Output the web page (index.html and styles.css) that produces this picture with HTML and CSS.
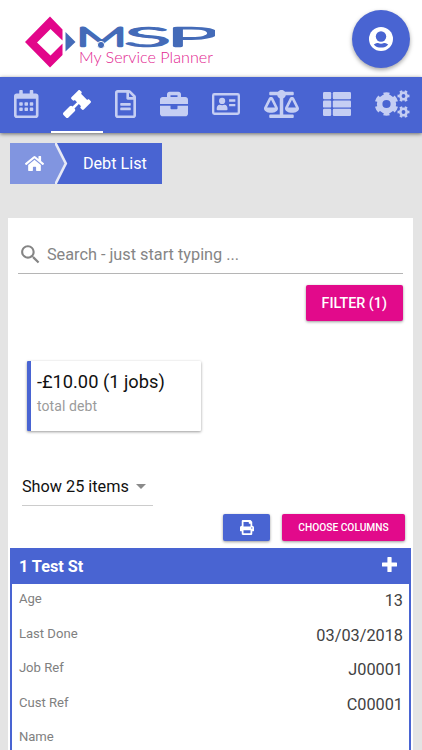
FILE: index.html
```html
<!DOCTYPE html>
<html lang="en">
<head>
<meta charset="utf-8">
<title>Debt List</title>
<link rel="stylesheet" href="styles.css">
</head>
<body>
<header class="top">
  <svg class="logo" width="190" height="54" viewBox="25 15 190 54">
    <path fill="#e2068a" fill-rule="evenodd" d="M50 16.5 62.5 29.5V55L50 67.5 25 42ZM50.5 29 37 42.5 50.5 55.5 62.5 43.5V40.5Z"/>
    <path fill="#446bb8" d="M65.5 32 75.5 42 65.5 51.5Z"/>
    <text class="brand" y="45.500"><tspan x="76" textLength="51" lengthAdjust="spacingAndGlyphs">M</tspan><tspan x="125" textLength="45" lengthAdjust="spacingAndGlyphs">S</tspan><tspan x="167" textLength="50" lengthAdjust="spacingAndGlyphs">P</tspan></text>
    <circle cx="101" cy="45" r="3.6" fill="#446bb8" stroke="#fff" stroke-width="1"/>
    <text class="tagline" x="79" y="62.5" textLength="134" lengthAdjust="spacingAndGlyphs">My Service Planner</text>
  </svg>
  <button class="account" aria-label="Account">
    <svg width="24" height="24" viewBox="0 0 24 24"><circle cx="12" cy="12" r="12" fill="#fff"/><circle cx="12" cy="9.5" r="5.2" fill="#4964d2"/><path fill="#4964d2" d="M4.8 17.4Q8 15.8 9 16.1 12 17.4 15 16.1 16 15.8 19.2 17.4 16.5 20.6 12 20.6 7.5 20.6 4.8 17.4Z"/></svg>
  </button>
</header>
<nav class="nav">
  <a class="tab"><svg width="24.5" height="28" viewBox="0 0 448 512"><path d="M148 288h-40c-6.600 0-12-5.400-12-12v-40c0-6.600 5.400-12 12-12h40c6.600 0 12 5.400 12 12v40c0 6.600-5.400 12-12 12zm108-12v-40c0-6.600-5.400-12-12-12h-40c-6.600 0-12 5.400-12 12v40c0 6.600 5.400 12 12 12h40c6.600 0 12-5.400 12-12zm96 0v-40c0-6.600-5.400-12-12-12h-40c-6.600 0-12 5.400-12 12v40c0 6.600 5.400 12 12 12h40c6.600 0 12-5.400 12-12zm-96 96v-40c0-6.600-5.400-12-12-12h-40c-6.600 0-12 5.400-12 12v40c0 6.600 5.400 12 12 12h40c6.600 0 12-5.400 12-12zm-96 0v-40c0-6.600-5.400-12-12-12h-40c-6.600 0-12 5.400-12 12v40c0 6.600 5.400 12 12 12h40c6.600 0 12-5.400 12-12zm192 0v-40c0-6.600-5.400-12-12-12h-40c-6.600 0-12 5.400-12 12v40c0 6.600 5.400 12 12 12h40c6.600 0 12-5.400 12-12zm96-260v352c0 26.500-21.500 48-48 48H48c-26.500 0-48-21.500-48-48V112c0-26.500 21.500-48 48-48h48V12c0-6.600 5.400-12 12-12h40c6.600 0 12 5.400 12 12v52h128V12c0-6.600 5.400-12 12-12h40c6.600 0 12 5.400 12 12v52h48c26.500 0 48 21.500 48 48zm-48 346V160H48v298c0 3.300 2.700 6 6 6h340c3.300 0 6-2.700 6-6z"/></svg></a>
  <a class="tab active"><svg width="28" height="28" viewBox="0 0 512 512"><path d="M504.971 199.362l-22.627-22.627c-9.373-9.373-24.569-9.373-33.941 0l-5.657 5.657L329.608 69.255l5.657-5.657c9.373-9.373 9.373-24.569 0-33.941L312.638 7.029c-9.373-9.373-24.569-9.373-33.941 0L154.246 131.480c-9.373 9.373-9.373 24.569 0 33.941l22.627 22.627c9.373 9.373 24.569 9.373 33.941 0l5.657-5.657 39.598 39.598-81.040 81.040-5.657-5.657c-12.497-12.497-32.758-12.497-45.255 0L9.373 412.118c-12.497 12.497-12.497 32.758 0 45.255l45.255 45.255c12.497 12.497 32.758 12.497 45.255 0l114.745-114.745c12.497-12.497 12.497-32.758 0-45.255l-5.657-5.657 81.040-81.040 39.598 39.598-5.657 5.657c-9.373 9.373-9.373 24.569 0 33.941l22.627 22.627c9.373 9.373 24.569 9.373 33.941 0l124.451-124.451c9.372-9.372 9.372-24.568 0-33.941z"/></svg></a>
  <a class="tab"><svg width="21" height="28" viewBox="0 0 384 512"><path d="M288 248v28c0 6.600-5.400 12-12 12H108c-6.600 0-12-5.400-12-12v-28c0-6.600 5.400-12 12-12h168c6.600 0 12 5.400 12 12zm-12 72H108c-6.600 0-12 5.400-12 12v28c0 6.600 5.400 12 12 12h168c6.600 0 12-5.400 12-12v-28c0-6.600-5.400-12-12-12zm108-188.100V464c0 26.500-21.500 48-48 48H48c-26.500 0-48-21.500-48-48V48C0 21.500 21.500 0 48 0h204.100C264.800 0 277 5.100 286 14.100L369.900 98c9 8.900 14.100 21.200 14.100 33.900zm-128-80V128h76.100L256 51.900zM336 464V176H232c-13.300 0-24-10.700-24-24V48H48v416h288z"/></svg></a>
  <a class="tab"><svg width="28" height="28" viewBox="0 0 512 512"><path d="M320 336c0 8.840-7.160 16-16 16h-96c-8.840 0-16-7.160-16-16v-48H0v144c0 25.600 22.400 48 48 48h416c25.600 0 48-22.400 48-48V288H320v48zm144-208h-80V80c0-25.600-22.400-48-48-48H176c-25.600 0-48 22.400-48 48v48H48c-25.600 0-48 22.400-48 48v80h512v-80c0-25.600-22.400-48-48-48zm-144 0H192V96h128v32z"/></svg></a>
  <a class="tab"><svg width="28" height="28" viewBox="0 0 576 512"><path fill-rule="evenodd" d="M48 32H528Q576 32 576 80V432Q576 480 528 480H48Q0 480 0 432V80Q0 32 48 32ZM48 80V432H528V80Z"/><circle cx="208" cy="192" r="64"/><path d="M96 365Q96 272 160 272 208 290 256 272 320 272 320 365 320 384 298 384H118Q96 384 96 365Z"/><path d="M352 160H480V208H352ZM352 256H480V304H352Z"/></svg></a>
  <a class="tab"><svg width="35" height="28" viewBox="0 0 640 512"><path d="M256 336h-.02c0-16.180 1.340-8.730-85.050-181.510-17.650-35.290-68.190-35.360-85.870 0C-2.060 328.750.02 320.330.02 336H0c0 44.180 57.310 80 128 80s128-35.820 128-80zM128 176l72 144H56l72-144zm511.980 160c0-16.180 1.340-8.730-85.050-181.510-17.650-35.290-68.190-35.360-85.870 0-87.120 174.260-85.040 165.840-85.040 181.510H384c0 44.180 57.310 80 128 80s128-35.820 128-80h-.02zM440 320l72-144 72 144H440zm88 128H352V153.250c23.510-10.290 41.160-31.480 46.390-57.250H528c8.840 0 16-7.160 16-16V48c0-8.840-7.160-16-16-16H383.640C369.040 12.680 346.090 0 320 0s-49.040 12.680-63.640 32H112c-8.840 0-16 7.160-16 16v32c0 8.840 7.160 16 16 16h129.610c5.230 25.760 22.870 46.960 46.390 57.250V448H112c-8.840 0-16 7.160-16 16v32c0 8.840 7.160 16 16 16h416c8.840 0 16-7.160 16-16v-32c0-8.840-7.160-16-16-16z"/></svg></a>
  <a class="tab"><svg width="28" height="28" viewBox="0 0 28 28"><rect y="2" width="8.200" height="7.200" rx="1.200"/><rect y="10.400" width="8.200" height="7.200" rx="1.200"/><rect y="18.800" width="8.200" height="7.200" rx="1.200"/><rect x="9.800" y="2" width="18.200" height="7.200" rx="1.200"/><rect x="9.800" y="10.400" width="18.200" height="7.200" rx="1.200"/><rect x="9.800" y="18.800" width="18.200" height="7.200" rx="1.200"/></svg></a>
  <a class="tab"><svg class="gears" width="35" height="28" viewBox="0 0 35 28"><circle cx="11.500" cy="14" r="6.900" stroke-width="5.600"/><circle cx="11.500" cy="14" r="10.200" stroke-width="3.200" pathLength="48" stroke-dasharray="4.400 3.600" stroke-dashoffset="-1.800"/><circle cx="28.500" cy="6" r="3.200" stroke-width="2.600"/><circle cx="28.500" cy="6" r="5" stroke-width="2" pathLength="48" stroke-dasharray="4 4" stroke-dashoffset="2"/><circle cx="28.500" cy="22" r="3.200" stroke-width="2.600"/><circle cx="28.500" cy="22" r="5" stroke-width="2" pathLength="48" stroke-dasharray="4 4" stroke-dashoffset="2"/></svg></a>
</nav>
<div class="crumbs">
  <a class="crumb-home"><svg width="19" height="17" viewBox="0 0 576 512"><path d="M280.370 148.260L96 300.110V464a16 16 0 0 0 16 16l112.060-.29a16 16 0 0 0 15.920-16V368a16 16 0 0 1 16-16h64a16 16 0 0 1 16 16v95.640a16 16 0 0 0 16 16.050L464 480a16 16 0 0 0 16-16V300L295.670 148.260a12.190 12.190 0 0 0-15.300 0zM571.600 251.470L488 182.560V44.050a12 12 0 0 0-12-12h-56a12 12 0 0 0-12 12v72.610L318.470 43a48 48 0 0 0-61 0L4.340 251.470a12 12 0 0 0-1.600 16.900l25.500 31A12 12 0 0 0 45.150 301l235.220-193.740a12.190 12.190 0 0 1 15.300 0L530.900 301a12 12 0 0 0 16.900-1.600l25.500-31a12 12 0 0 0-1.700-16.930z"/></svg></a>
  <svg class="chevron" width="14" height="41" viewBox="0 0 14 41"><path fill="#8195e0" d="M0 0H1L11 20.500 1 41H0Z"/><path fill="none" stroke="#e6e9f6" stroke-width="2.600" d="M0-1 10.800 20.500 0 42"/></svg>
  <span class="crumb">Debt List</span>
</div>
<main class="panel">
  <div class="search">
    <svg width="25" height="25" viewBox="0 0 24 24"><path fill="#858585" d="M15.500 14h-.79l-.28-.27C15.410 12.590 16 11.110 16 9.500 16 5.910 13.090 3 9.500 3S3 5.910 3 9.500 5.910 16 9.500 16c1.610 0 3.090-.59 4.230-1.570l.27.28v.79l5 4.990L20.490 19l-4.990-5zm-6 0C7.010 14 5 11.990 5 9.500S7.010 5 9.500 5 14 7.010 14 9.500 11.990 14 9.500 14z"/></svg>
    <span>Search - just start typing ...</span>
  </div>
  <div class="filter-row"><button class="btn filter">FILTER (1)</button></div>
  <section class="total">
    <div class="amount">-£10.00 (1 jobs)</div>
    <div class="caption">total debt</div>
  </section>
  <div class="pager"><span>Show 25 items</span><i class="caret"></i></div>
  <div class="tools">
    <button class="btn print" aria-label="Print"><svg width="14" height="15" viewBox="0 0 512 512" preserveAspectRatio="none"><path d="M448 192V77.250c0-8.490-3.370-16.620-9.370-22.630L393.370 9.370c-6-6-14.140-9.370-22.630-9.370H96C78.330 0 64 14.330 64 32v160c-35.350 0-64 28.650-64 64v112c0 8.840 7.160 16 16 16h48v96c0 17.670 14.330 32 32 32h320c17.670 0 32-14.330 32-32v-96h48c8.840 0 16-7.160 16-16V256c0-35.350-28.650-64-64-64zm-64 256H128v-96h256v96zm0-224H128V64h192v48c0 8.840 7.160 16 16 16h48v96zm48 72c-13.250 0-24-10.750-24-24 0-13.260 10.750-24 24-24s24 10.740 24 24c0 13.250-10.750 24-24 24z"/></svg></button>
    <button class="btn columns">CHOOSE COLUMNS</button>
  </div>
  <article class="record">
    <h2 class="record-head"><span>1 Test St</span><svg width="15" height="15" viewBox="0 0 15 15"><path d="M6 0H9Q9.600 0 9.600.6V5.400H14.400Q15 5.400 15 6V9Q15 9.600 14.400 9.600H9.600V14.400Q9.600 15 9 15H6Q5.400 15 5.400 14.400V9.600H.6Q0 9.600 0 9V6Q0 5.400.6 5.400H5.400V.6Q5.400 0 6 0Z"/></svg></h2>
    <dl class="fields">
      <div class="field"><dt>Age</dt><dd>13</dd></div>
      <div class="field"><dt>Last Done</dt><dd>03/03/2018</dd></div>
      <div class="field"><dt>Job Ref</dt><dd>J00001</dd></div>
      <div class="field"><dt>Cust Ref</dt><dd>C00001</dd></div>
      <div class="field"><dt>Name</dt><dd></dd></div>
    </dl>
  </article>
</main>
</body>
</html>
```
FILE: styles.css
```css
* { box-sizing: border-box; }
body {
  margin: 0;
  height: 750px;
  overflow: hidden;
  background: #e4e4e4;
  font-family: Roboto, "Liberation Sans", sans-serif;
  color: #111;
}
svg { display: block; flex: none; }
button { border: 0; padding: 0; font-family: inherit; color: #fff; }
.top {
  height: 77px;
  background: #fff;
  display: flex;
  justify-content: space-between;
  align-items: flex-start;
  padding: 10px 12px 0 25px;
}
.logo { margin-top: 5px; }
.brand {
  font-family: Lato, sans-serif;
  font-weight: 100;
  font-size: 26px;
  fill: #446bb8;
  stroke: #446bb8;
  stroke-width: 2.6px;
  stroke-linejoin: round;
  vector-effect: non-scaling-stroke;
}
.tagline { font-family: Lato, sans-serif; font-weight: 300; font-size: 15px; fill: #e2248f; }
.account {
  width: 58px;
  height: 58px;
  border-radius: 50%;
  background: #4964d2;
  display: flex;
  align-items: center;
  justify-content: center;
  box-shadow: 0 2px 4px rgba(0,0,0,.35);
}
.nav {
  position: relative;
  height: 56px;
  background: #4964d2;
  display: flex;
  padding-left: 2.2px;
  box-shadow: 0 1px 4px rgba(0,0,0,.55);
}
.tab {
  padding: 13px 12px 0;
  border-bottom: 2px solid transparent;
  fill: #c5cef3;
}
.tab.active { fill: #fff; border-color: #fff; }
.gears { fill: none; stroke: #c5cef3; }
.crumbs {
  display: flex;
  width: 151.600px;
  height: 41px;
  margin: 10px 0 0 10.400px;
  background: #4964d2;
}
.crumb-home {
  width: 45px;
  background: #8195e0;
  padding: 12px 0 0 15px;
  fill: #fff;
}
.crumb { color: #fff; font-size: 16.200px; line-height: 42px; margin-left: 13.500px; white-space: nowrap; }
.panel {
  margin: 34px 9px 0 8.400px;
  height: 540px;
  background: #fff;
  padding: 0 2px;
}
.search {
  height: 56px;
  margin: 0 8px;
  padding-top: 17px;
  border-bottom: 1px solid #b5b5b5;
  display: flex;
  align-items: center;
  gap: 3.500px;
  font-size: 16.300px;
  color: #858585;
}
.btn {
  border-radius: 2px;
  display: flex;
  align-items: center;
  justify-content: center;
  font-weight: 500;
  box-shadow: 0 1px 3px rgba(0,0,0,.4);
}
.filter-row { display: flex; justify-content: flex-end; padding: 11px 8px 0; }
.filter { width: 97.500px; height: 36px; background: #e20a8b; font-size: 14.300px; }
.total {
  width: 174px;
  height: 70.500px;
  margin: 39.500px 0 0 16.500px;
  border-left: 4px solid #4964d2;
  border-radius: 1px;
  padding: 9.500px 0 0 6px;
  box-shadow: 0 1px 3px rgba(0,0,0,.4);
}
.amount { font-size: 18.250px; line-height: 23px; white-space: nowrap; }
.caption { font-size: 14px; line-height: 20px; margin-top: 3px; color: #9b9b9b; letter-spacing: .1px; }
.pager {
  width: 131px;
  height: 38px;
  margin: 37px 0 0 11.500px;
  border-bottom: 1px solid #ccc;
  display: flex;
  align-items: center;
  gap: 7px;
  font-size: 16.250px;
}
.caret { border: 5px solid transparent; border-top-color: #8a8a8a; border-bottom: 0; }
.tools { display: flex; justify-content: flex-end; gap: 12px; padding: 8px 6px 0 0; }
.print { width: 47px; height: 27px; background: #4964d2; fill: #fff; }
.columns { width: 123px; height: 27px; background: #e20a8b; font-size: 10.200px; }
.record { border: 2px solid #4964d2; border-top: 0; height: 230px; margin-top: 7px; }
.record-head {
  margin: 0;
  height: 36px;
  background: #4964d2;
  color: #fff;
  fill: #fff;
  font-size: 16.250px;
  font-weight: 700;
  display: flex;
  justify-content: space-between;
  align-items: center;
  padding: 0 12px 3px 6.500px;
}
.record-head span { padding-top: 3px; }
.fields { margin: 0; }
.field {
  height: 34.600px;
  display: flex;
  justify-content: space-between;
  padding: 6px 6px 0 6.500px;
}
dt { font-size: 13.100px; line-height: 18px; color: #808080; }
dd { margin: 0; font-size: 16.300px; line-height: 22px; color: #424242; }
```
